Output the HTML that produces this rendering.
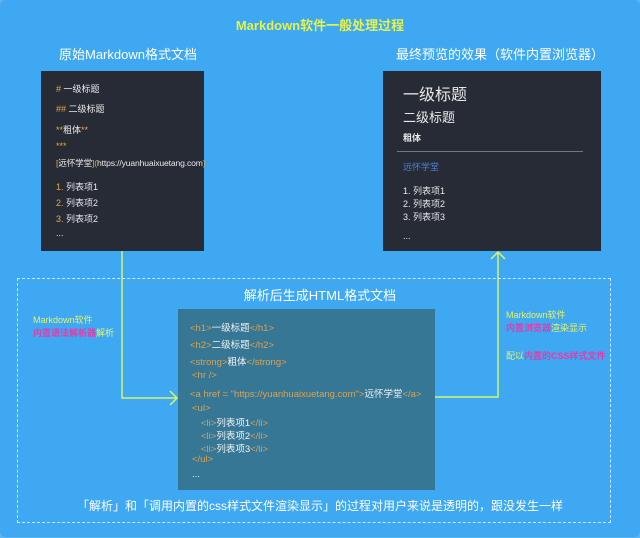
<!DOCTYPE html>
<html><head><meta charset="utf-8"><style>
*{margin:0;padding:0;box-sizing:border-box}
body{width:640px;height:538px;background:#5fb4ef;position:relative;overflow:hidden;font-family:"Liberation Sans","Noto Sans CJK SC",sans-serif}
.bg{position:absolute;left:0;top:0;width:640px;height:537px;background:#3ea8f3;border-radius:6px}
.a{position:absolute;white-space:nowrap}
.box{position:absolute;background:#272b36;color:#e8e8e8}
.o{color:#e8a84a}
.t{color:#e0a048}
.dash{position:absolute;left:17px;top:278px;width:594px;height:245px;border:1px dashed #cfe8fb}
.mid{position:absolute;left:178px;top:309px;width:257px;height:181px;background:#377796;color:#f2f2f2;font-size:9.5px}
.mid div{position:absolute;left:12px;white-space:nowrap}
.l div{position:absolute;left:15px;font-size:9px;white-space:nowrap}
.r div{position:absolute;left:20px;white-space:nowrap}
.y{color:#e4f36a}.m{color:#e63aa8;font-weight:bold}
</style></head><body>
<div class="bg"></div>
<div class="a" style="left:0;width:640px;text-align:center;top:15px;font-size:13px;font-weight:bold;color:#e6f24a">Markdown软件一般处理过程</div>
<div class="a" style="left:59px;top:44px;font-size:13px;color:#fff">原始Markdown格式文档</div>
<div class="a" style="left:396px;top:44px;font-size:13px;color:#fff">最终预览的效果（软件内置浏览器）</div>

<div class="box l" style="left:41px;top:71px;width:163px;height:180px">
<div style="top:11px"><span class="o">#</span> 一级标题</div>
<div style="top:31px"><span class="o">##</span> 二级标题</div>
<div style="top:52px"><span class="o">**</span>粗体<span class="o">**</span></div>
<div style="top:70px" class="o">***</div>
<div style="top:86px;font-size:8.6px;letter-spacing:-0.15px"><span class="o">[</span>远怀学堂<span class="o">](</span>https://yuanhuaixuetang.com<span class="o">)</span></div>
<div style="top:109px"><span class="o">1.</span> 列表项1</div>
<div style="top:125px"><span class="o">2.</span> 列表项2</div>
<div style="top:141px"><span class="o">3.</span> 列表项2</div>
<div style="top:157px">...</div>
</div>

<div class="box r" style="left:383px;top:71px;width:218px;height:180px">
<div style="top:10px;font-size:16px">一级标题</div>
<div style="top:36px;font-size:13px">二级标题</div>
<div style="top:60px;font-size:9px;font-weight:bold">粗体</div>
<div style="left:14px;top:80px;width:186px;height:1px;background:#777"></div>
<div style="top:89px;font-size:9px;color:#4f7fd0">远怀学堂</div>
<div style="top:113px;font-size:9px">1. 列表项1</div>
<div style="top:126px;font-size:9px">2. 列表项2</div>
<div style="top:139px;font-size:9px">3. 列表项3</div>
<div style="top:160px;font-size:9px">...</div>
</div>

<div class="dash"></div>
<div class="a" style="left:0;width:640px;text-align:center;top:285px;font-size:13px;color:#fff">解析后生成HTML格式文档</div>

<div class="a y" style="left:33px;top:313px;font-size:9px">Markdown软件</div>
<div class="a" style="left:33px;top:326px;font-size:9px"><span class="m">内置语法解析器</span><span class="y">解析</span></div>
<div class="a y" style="left:506px;top:308px;font-size:9px">Markdown软件</div>
<div class="a" style="left:506px;top:321px;font-size:9px"><span class="m">内置浏览器</span><span class="y">渲染显示</span></div>
<div class="a" style="left:506px;top:349px;font-size:9px"><span class="y">配以</span><span class="m">内置的CSS样式文件</span></div>

<svg class="a" style="left:0;top:0" width="640" height="538">
<polyline points="122,251 122,398 176,398" fill="none" stroke="#d8f46a" stroke-width="1.5"/>
<polyline points="170,391 177,398 170,405" fill="none" stroke="#d8f46a" stroke-width="1.5"/>
<polyline points="435,397 498,397 498,252" fill="none" stroke="#d8f46a" stroke-width="1.5"/>
<polyline points="491,259 498,252 505,259" fill="none" stroke="#d8f46a" stroke-width="1.5"/>
</svg>

<div class="mid">
<div style="top:11px"><span class="t">&lt;h1&gt;</span>一级标题<span class="t">&lt;/h1&gt;</span></div>
<div style="top:28px"><span class="t">&lt;h2&gt;</span>二级标题<span class="t">&lt;/h2&gt;</span></div>
<div style="top:45px"><span class="t">&lt;strong&gt;</span>粗体<span class="t">&lt;/strong&gt;</span></div>
<div style="top:61px;left:14px" class="t">&lt;hr /&gt;</div>
<div style="top:77px"><span class="t">&lt;a href = "https://yuanhuaixuetang.com"&gt;</span>远怀学堂<span class="t">&lt;/a&gt;</span></div>
<div style="top:94px;left:14px" class="t">&lt;ul&gt;</div>
<div style="top:106px;left:23px"><span class="t">&lt;li&gt;</span>列表项1<span class="t">&lt;/li&gt;</span></div>
<div style="top:119px;left:23px"><span class="t">&lt;li&gt;</span>列表项2<span class="t">&lt;/li&gt;</span></div>
<div style="top:132px;left:23px"><span class="t">&lt;li&gt;</span>列表项3<span class="t">&lt;/li&gt;</span></div>
<div style="top:145px;left:14px" class="t">&lt;/ul&gt;</div>
<div style="top:160px;left:14px">...</div>
</div>

<div class="a" style="left:0;width:640px;text-align:center;top:497px;font-size:12px;color:#fff">「解析」和「调用内置的css样式文件渲染显示」的过程对用户来说是透明的，跟没发生一样</div>
</body></html>
